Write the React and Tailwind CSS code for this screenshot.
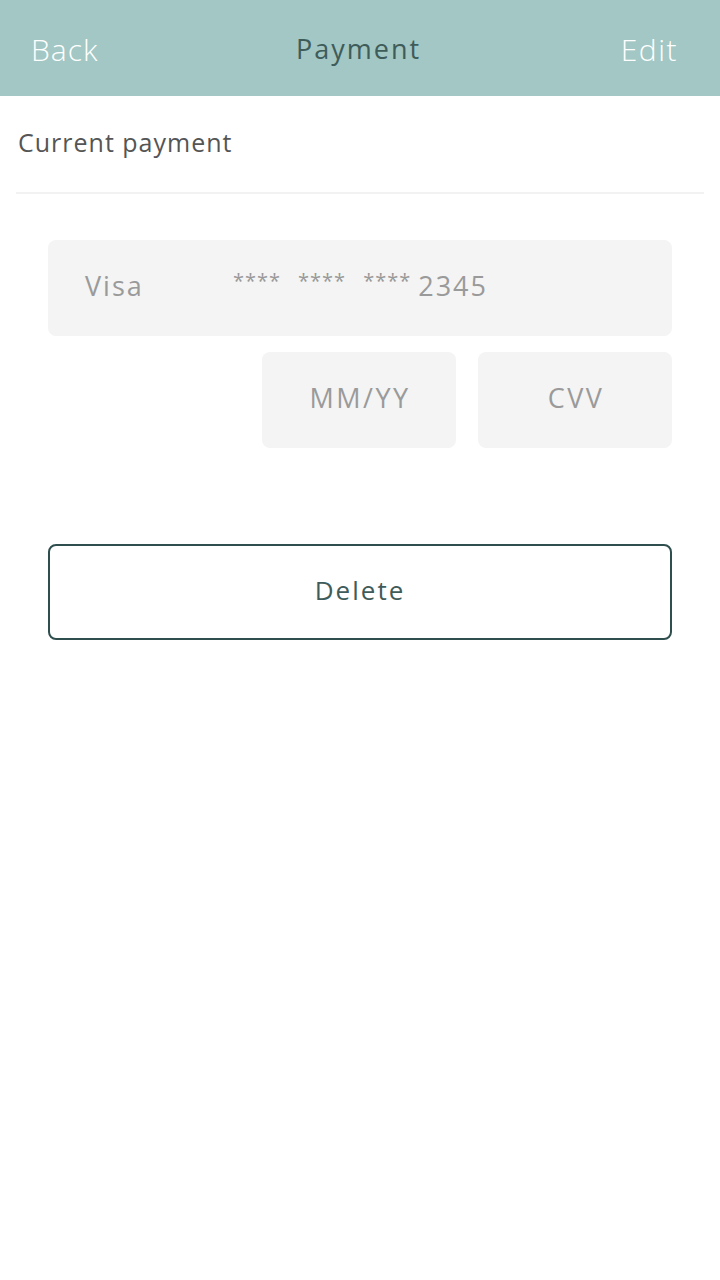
import React from "react";

const Stars = () => (
  <span className="text-[#999] text-[20px] tracking-[1px] -mt-[10px]">****</span>
);

const PaymentScreen = () => {
  return (
    <div
      className="w-[720px] min-h-[1280px] bg-white"
      style={{ fontFamily: "'Open Sans', Lato, sans-serif" }}
    >
      {/* top bar */}
      <div className="h-[96px] bg-[#a2c7c4] flex items-center justify-between pl-[31px] pr-[42px] pt-[2px]">
        <button className="text-white text-[30px] font-light tracking-[1px]">Back</button>
        <h1 className="text-[#3f5c5a] text-[27px] font-normal tracking-[2px] pr-[2px]">Payment</h1>
        <button className="text-white text-[30px] font-light tracking-[1.5px]">Edit</button>
      </div>

      <div className="px-[16px]">
        <div className="h-[98px] flex items-center pl-[2px] border-b-2 border-[#f2f2f2]">
          <span className="text-[#555] text-[25px] tracking-[1px] pb-[2px]">Current payment</span>
        </div>
      </div>

      <div className="px-[48px] pt-[46px]">
        <div className="h-[96px] bg-[#f4f4f4] rounded-[8px] flex items-center pl-[37px] pb-[4px]">
          <span className="text-[#9a9a9a] text-[27px] tracking-[2px] w-[148px]">Visa</span>
          <div className="flex items-center gap-[17px]">
            <Stars />
            <Stars />
            <Stars />
          </div>
          <span className="text-[#9a9a9a] text-[27px] tracking-[2px] ml-[7px]">2345</span>
        </div>

        <div className="flex justify-end gap-[22px] mt-[16px]">
          <div className="w-[194px] h-[96px] bg-[#f4f4f4] rounded-[8px] flex items-center justify-center pb-[4px]">
            <span className="text-[#9a9a9a] text-[27px] tracking-[2.5px] pl-[2px]">MM/YY</span>
          </div>
          <div className="w-[194px] h-[96px] bg-[#f4f4f4] rounded-[8px] flex items-center justify-center pb-[4px]">
            <span className="text-[#9a9a9a] text-[27px] tracking-[2.5px] pl-[2px]">CVV</span>
          </div>
        </div>

        <button className="mt-[96px] w-full h-[96px] border-2 border-[#2f4f4f] rounded-[8px] text-[#3f5c5a] text-[26px] tracking-[2px] pb-[4px]">
          Delete
        </button>
      </div>
    </div>
  );
};

export default function App() {
  return <PaymentScreen />;
}
